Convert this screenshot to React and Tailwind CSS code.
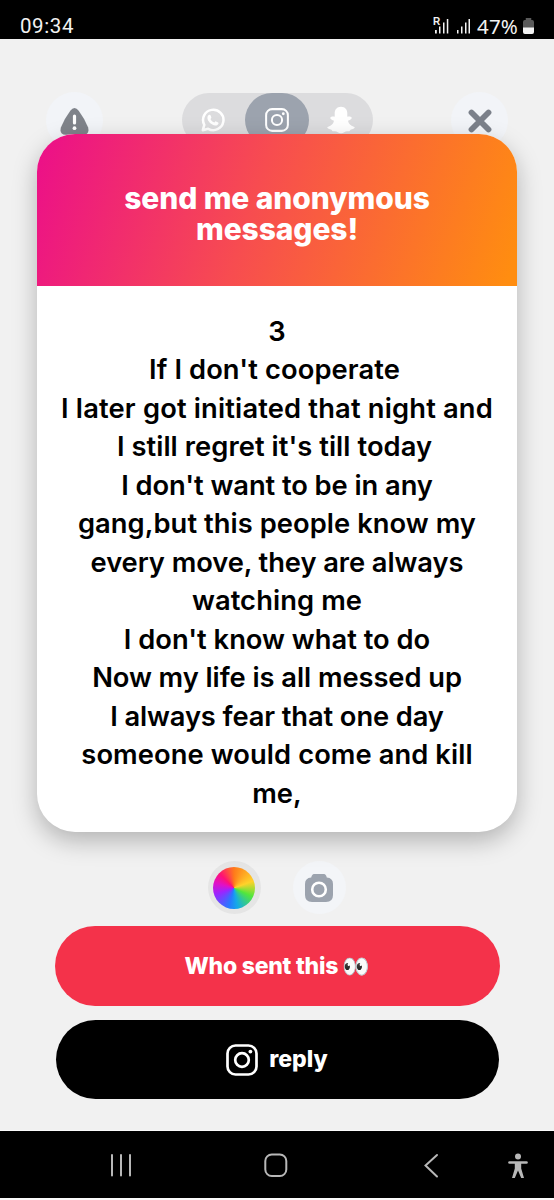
const lines = [
  ["3", "tracking-[0px]"],
  ["If I don't cooperate", "tracking-[0.1px] pr-[5px]"],
  ["I later got initiated that night and", "tracking-[0.17px]"],
  ["I still regret it's till today", "tracking-[0.06px] pr-[5px]"],
  ["I don't want to be in any", "tracking-[-0.06px]"],
  ["gang,but this people know my", "tracking-[0.06px]"],
  ["every move, they are always", "tracking-[-0.07px]"],
  ["watching me", "tracking-[0.1px]"],
  ["I don't know what to do", "tracking-[0px]"],
  ["Now my life is all messed up", "tracking-[-0.06px]"],
  ["I always fear that one day", "tracking-[-0.1px]"],
  ["someone would come and kill", "tracking-[0.09px]"],
  ["me,", "tracking-[0px]"],
];

function Instagram({ className, stroke = 2.7 }) {
  return (
    <svg className={className} viewBox="0 0 32 32" fill="none" stroke="currentColor" strokeWidth={stroke}>
      <rect x="1.5" y="1.5" width="29" height="29" rx="8" />
      <circle cx="16" cy="16" r="6.8" />
      <circle cx="24.4" cy="7.6" r="1.9" fill="currentColor" stroke="none" />
    </svg>
  );
}

function WhatsApp() {
  return (
    <svg className="size-6" viewBox="0 0 24 24" fill="none">
      <path d="M1.800 22.200l1.500-5.400A10.200 10.200 0 1 1 7.200 20.800z" stroke="#fff" strokeWidth="2.5" strokeLinejoin="round" />
      <path d="M8.200 6.800c.6-.2 1.100 0 1.300.5l.8 1.900c.2.4 0 .8-.9 1.800.9 1.700 2.200 2.900 4 3.600 1-1.200 1.200-1.400 1.700-1.200l2 1c.5.2.6.5.4 1.100-.4 1.400-1.900 2.200-3.300 2-4-.7-7.300-3.900-7.800-7.300-.1-1.300.6-3 1.800-3.400z" fill="#fff" />
    </svg>
  );
}

function Ghost() {
  return (
    <svg className="h-[28px] w-[28px]" viewBox="0 0 28 28" fill="#fff">
      <path d="M14 .7c4 0 6.300 2.900 6.300 6.500v3.600c1-.2 3.200-.8 4.200.5.900 1.300-.7 2.500-3.500 3.500.7 3.200 2.600 4.900 5.800 5.900 1.200.4 1.200 1.200 0 1.800-1 .6-2.500.9-3.300 1.200-.5 1-.7 1.700-2.500 1.500-3.300-.3-4 2.100-7 2.100s-3.700-2.400-7-2.100c-1.800.2-2-.5-2.500-1.500-.8-.3-2.300-.6-3.300-1.200-1.200-.6-1.200-1.400 0-1.800 3.200-1 5.100-2.700 5.800-5.900-2.800-1-4.400-2.200-3.500-3.500 1-1.300 3.200-.7 4.200-.5V7.200C7.700 3.600 10 .7 14 .7z" />
    </svg>
  );
}

function StatusBar() {
  return (
    <header className="flex h-[39px] items-start bg-black pl-5 pr-[20px] text-[#f2f2f2]">
      <span className="mt-[12px] text-[20.5px] leading-[28px] font-['Roboto',sans-serif] tracking-[0.6px]">09:34</span>
      <svg className="mt-[17px] ml-auto h-[17px] w-[40px]" viewBox="0 0 40 17" fill="currentColor">
        <text x="0" y="8" fontSize="10" fontWeight="700" fontFamily="Liberation Sans, sans-serif">R</text>
        <path d="M2 13h1.800v3.500H2zM6 9.500h1.500v7H6zM10 5.500h1.500v11H10zM13.800 2h1.500v14.500h-1.500zM24 13h1.500v3.500H24zM28 9.500h1.500v7H28zM32 5.500h1.500v11H32zM35.500 2H37v14.500h-1.500z" />
      </svg>
      <span className="mt-[12px] ml-[4px] w-[42px] text-[20.5px] leading-[28px] font-['Noto_Sans',sans-serif] tracking-[0.2px]">47%</span>
      <svg className="mt-[18px] ml-[4px] h-[16px] w-[11px]" viewBox="0 0 12 16" preserveAspectRatio="none">
        <path d="M3 0h6v2h1q2 0 2 2v6H0V4q0-2 2-2h1z" fill="#5a5a5a" />
        <path d="M0 9.500h12V14q0 2-2 2H2q-2 0-2-2z" fill="#f2f2f2" />
      </svg>
    </header>
  );
}

function Toolbar() {
  return (
    <div className="flex h-[95px] items-start justify-between px-[46px] pt-[53px] text-[#7f838a]">
      <div className="flex size-[57px] items-center justify-center rounded-full bg-[#f2f4f8]">
        <svg className="mt-[1px] h-[27px] w-[29px]" viewBox="0 0 29 27">
          <path d="M10.300 2.700q4.200-5.400 8.400 0 6 8 9.300 16.500 2 7-4.500 7.500h-18Q-1 26.200 1 19.200 4.300 10.700 10.300 2.700z" fill="currentColor" />
          <path d="M14.500 8v7" stroke="#fff" strokeWidth="3.2" strokeLinecap="round" />
          <circle cx="14.5" cy="20.2" r="1.9" fill="#fff" />
        </svg>
      </div>
      <div className="mt-[1px] flex h-[54px] w-[191px] rounded-full bg-[#dcdcde] text-white">
        <div className="flex flex-1 items-center justify-center"><WhatsApp /></div>
        <div className="flex w-[64px] items-center justify-center rounded-full bg-[#9ca3ae]"><Instagram className="size-6" /></div>
        <div className="flex flex-1 items-center justify-center"><Ghost /></div>
      </div>
      <div className="flex size-[57px] items-center justify-center rounded-full bg-[#f2f4f8]">
        <svg className="size-6" viewBox="0 0 24 24" stroke="#7b808a" strokeWidth="5.8" strokeLinecap="round">
          <path d="M3.500 3.500l17 17M20.500 3.500l-17 17" />
        </svg>
      </div>
    </div>
  );
}

function NavBar() {
  return (
    <nav className="mt-[31px] h-[70px] border-t border-b-2 border-[#fafafa] bg-black">
      <svg className="h-[67px] w-[554px]" viewBox="0 0 554 67" fill="none" stroke="#b8b8b8" strokeWidth="2" strokeLinecap="round">
        <path d="M112 24v20.500M121 24v20.500M130 24v20.500" />
        <rect x="265.3" y="23.5" width="21" height="21.5" rx="6.5" />
        <path d="M437 24l-11.500 10.500L437 45.500" />
        <circle cx="518" cy="25.5" r="3" fill="#b8b8b8" stroke="none" />
        <path d="M509.500 31.500h17" strokeWidth="2.6" />
        <path d="M514.800 32h6.400v5.500l2.800 9.500h-2.800L518 39.500l-3.200 7.500H512l2.800-9.500z" fill="#b8b8b8" stroke="none" />
      </svg>
    </nav>
  );
}

export default function App() {
  return (
    <div className="h-[1200px] w-[554px] overflow-hidden bg-[#f1f1f1] font-['Inter',sans-serif]">
      <StatusBar />
      <Toolbar />
      <main className="relative z-10 ml-[37px] h-[698px] w-[480px] rounded-[38px] bg-white shadow-[0_9px_24px_rgba(0,0,0,0.26)]">
        <h1 className="h-[152px] rounded-t-[38px] bg-[linear-gradient(108deg,#ec1187_2%,#f74c50_45%,#ff8d10_98%)] px-[70px] pt-[49px] text-center text-[30px] leading-[31px] font-extrabold tracking-[-0.1px] text-white">
          send me anonymous messages!
        </h1>
        <div className="flex flex-col items-center pt-[26.5px] text-[27.3px] leading-[38.5px] font-semibold whitespace-nowrap text-black">
          {lines.map(([text, spacing]) => (
            <span key={text} className={spacing}>{text}</span>
          ))}
        </div>
      </main>
      <div className="flex w-[553px] justify-center gap-[32px] pt-[29px]">
        <div className="flex size-[53px] items-center justify-center rounded-full bg-[#e5e5e5]">
          <div className="size-[42px] rounded-full bg-[conic-gradient(#ff7a1a,#ffd22a_70deg,#52e63c_115deg,#14a9e8_170deg,#2779ff_195deg,#9a25ff_250deg,#e010c8_285deg,#ff1175_315deg,#ff7a1a)]" />
        </div>
        <div className="flex size-[53px] items-center justify-center rounded-full bg-[#f3f5f8]">
          <svg className="h-[28px] w-[28px]" viewBox="0 0 28 28">
            <path d="M9 0h10q2 0 2.800 3.500Q28 4 28 10v11q0 7-7 7H7q-7 0-7-7V10Q0 4 6.200 3.500 7 0 9 0z" fill="#9ca3ae" />
            <circle cx="14" cy="15.5" r="6.8" fill="none" stroke="#fff" strokeWidth="2.6" />
          </svg>
        </div>
      </div>
      <div className="mt-[12px] flex flex-col items-center gap-[14px] text-white">
        <button className="flex h-[80px] w-[445px] items-center justify-center rounded-full bg-[#f4324a] text-[23px] font-extrabold">
          <span className="tracking-[-0.25px]">Who sent this</span>
          <span className="ml-[4px] text-[22px] font-['Noto_Color_Emoji',sans-serif]">👀</span>
        </button>
        <button className="flex h-[79px] w-[443px] items-center justify-center gap-[11px] rounded-full bg-black text-[23px] font-extrabold">
          <Instagram className="size-8" />
          <span>reply</span>
        </button>
      </div>
      <NavBar />
    </div>
  );
}
